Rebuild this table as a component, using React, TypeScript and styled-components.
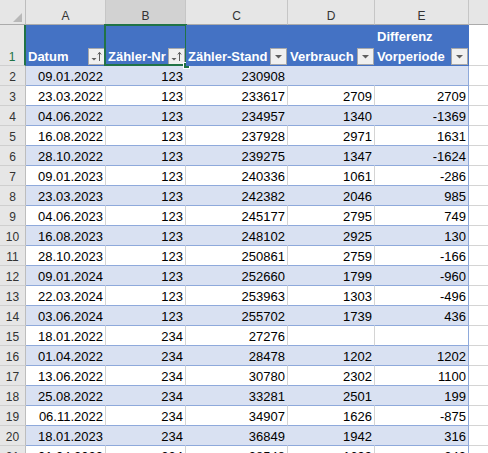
import React from "react";
import styled, { createGlobalStyle, css } from "styled-components";

const COLS = "26px 80px 80px 102px 87px 94px 1fr";

const GlobalStyle = createGlobalStyle`
  html, body { margin: 0; padding: 0; background: #fff; }
  body {
    font-family: "Liberation Sans", Arial, sans-serif;
    font-size: 13px;
    color: #000;
  }
  * { box-sizing: border-box; }
`;

const Sheet = styled.div`
  width: 488px;
  height: 453px;
  overflow: hidden;
  background: #fff;
`;

const Row = styled.div<{ $h: number }>`
  display: grid;
  grid-template-columns: ${COLS};
  height: ${(p) => p.$h}px;
`;

const Corner = styled.div`
  background: #e6e6e6;
  border-right: 1px solid #bdbdbd;
  border-bottom: 1px solid #ababab;
  display: flex;
  align-items: flex-end;
  justify-content: flex-end;
  padding: 0 3px 2px 0;
`;

const ColHeader = styled.div<{ $selected?: boolean }>`
  background: ${(p) => (p.$selected ? "#d2d2d2" : "#e6e6e6")};
  border-right: 1px solid #c6c6c6;
  border-bottom: 1px solid #ababab;
  display: flex;
  align-items: flex-end;
  justify-content: center;
  padding-bottom: 1px;
  font-size: 12px;
  line-height: 14px;
  color: #333;
`;

const RowHeader = styled.div<{ $selected?: boolean }>`
  background: #e6e6e6;
  border-right: ${(p) => (p.$selected ? "2px solid #217346" : "1px solid #bdbdbd")};
  border-bottom: 1px solid #cfcfcf;
  display: flex;
  align-items: flex-end;
  justify-content: center;
  font-size: 12px;
  line-height: 16px;
  color: ${(p) => (p.$selected ? "#217346" : "#333")};
`;

const HeadCell = styled.div<{ $last?: boolean }>`
  position: relative;
  background: #4472c4;
  border-right: 1px solid #4472c4;
  border-bottom: 1px solid #4472c4;
  display: flex;
  align-items: flex-end;
  justify-content: space-between;
  padding-left: 2px;
  color: #fff;
  font-weight: bold;
  line-height: 16px;
  white-space: nowrap;
  overflow: visible;
`;

const HeadLabel = styled.div`
  display: flex;
  flex-direction: column;
  gap: 4px;
`;

const FilterButton = styled.span`
  flex: none;
  width: 17px;
  height: 17px;
  background: #f0f0f0;
  border: 1px solid #a9a9a9;
  display: flex;
  align-items: center;
  justify-content: center;
`;

const Selection = styled.span`
  position: absolute;
  left: -2px;
  top: -1px;
  right: -2px;
  bottom: -1px;
  border: 2px solid #217346;
  pointer-events: none;
`;

const Handle = styled.span`
  position: absolute;
  right: -5px;
  bottom: -5px;
  width: 7px;
  height: 7px;
  background: #217346;
  border: 1px solid #fff;
`;

const DataCell = styled.div<{ $band: boolean; $last?: boolean }>`
  background: ${(p) => (p.$band ? "#d9e1f2" : "#fff")};
  border-right: 1px solid
    ${(p) => (p.$last ? "#8ea9db" : p.$band ? "#d9e1f2" : "#d4d4d4")};
  border-bottom: 1px solid #8ea9db;
  display: flex;
  align-items: flex-end;
  justify-content: flex-end;
  padding-right: 2px;
  line-height: 16px;
  white-space: nowrap;
`;

const OuterCell = styled.div`
  background: #fff;
  border-bottom: 1px solid #d4d4d4;
`;

const OuterColHeader = styled.div`
  background: #e6e6e6;
  border-bottom: 1px solid #ababab;
`;

const Triangle = () => (
  <svg width="9" height="9" viewBox="0 0 9 9">
    <polygon points="9,0 9,9 0,9" fill="#b8b8b8" />
  </svg>
);

const PlainIcon = () => (
  <svg width="15" height="15" viewBox="0 0 15 15">
    <polygon points="4,6 11,6 7.5,9.5" fill="#5f5f5f" />
  </svg>
);

const SortedIcon = () => (
  <svg width="15" height="15" viewBox="0 0 15 15">
    <polygon points="2.5,9 7.5,9 5,11.5" fill="#5f5f5f" />
    <line x1="10.5" y1="3.5" x2="10.5" y2="12" stroke="#5f5f5f" strokeWidth="1" />
    <polyline points="8.8,5.5 10.5,3.3 12.2,5.5" fill="none" stroke="#5f5f5f" strokeWidth="1" />
  </svg>
);

const headers: { label: string[]; sorted?: boolean; selected?: boolean }[] = [
  { label: ["Datum"], sorted: true },
  { label: ["Zähler-Nr"], sorted: true, selected: true },
  { label: ["Zähler-Stand"] },
  { label: ["Verbrauch"] },
  { label: ["Differenz", "Vorperiode"] },
];

const data: string[][] = [
  ["09.01.2022", "123", "230908", "", ""],
  ["23.03.2022", "123", "233617", "2709", "2709"],
  ["04.06.2022", "123", "234957", "1340", "-1369"],
  ["16.08.2022", "123", "237928", "2971", "1631"],
  ["28.10.2022", "123", "239275", "1347", "-1624"],
  ["09.01.2023", "123", "240336", "1061", "-286"],
  ["23.03.2023", "123", "242382", "2046", "985"],
  ["04.06.2023", "123", "245177", "2795", "749"],
  ["16.08.2023", "123", "248102", "2925", "130"],
  ["28.10.2023", "123", "250861", "2759", "-166"],
  ["09.01.2024", "123", "252660", "1799", "-960"],
  ["22.03.2024", "123", "253963", "1303", "-496"],
  ["03.06.2024", "123", "255702", "1739", "436"],
  ["18.01.2022", "234", "27276", "", ""],
  ["01.04.2022", "234", "28478", "1202", "1202"],
  ["13.06.2022", "234", "30780", "2302", "1100"],
  ["25.08.2022", "234", "33281", "2501", "199"],
  ["06.11.2022", "234", "34907", "1626", "-875"],
  ["18.01.2023", "234", "36849", "1942", "316"],
  ["01.04.2023", "234", "38548", "1699", "-243"],
];

export default function App() {
  return (
    <>
      <GlobalStyle />
      <Sheet>
        <Row $h={25}>
          <Corner>
            <Triangle />
          </Corner>
          {["A", "B", "C", "D", "E"].map((l) => (
            <ColHeader key={l} $selected={l === "B"}>
              {l}
            </ColHeader>
          ))}
          <OuterColHeader />
        </Row>
        <Row $h={41}>
          <RowHeader $selected>1</RowHeader>
          {headers.map((h, i) => (
            <HeadCell key={i} $last={i === 4}>
              <HeadLabel>
                {h.label.map((t) => (
                  <span key={t}>{t}</span>
                ))}
              </HeadLabel>
              <FilterButton>{h.sorted ? <SortedIcon /> : <PlainIcon />}</FilterButton>
              {h.selected && (
                <Selection>
                  <Handle />
                </Selection>
              )}
            </HeadCell>
          ))}
          <OuterCell />
        </Row>
        {data.map((r, i) => {
          const band = i % 2 === 0;
          return (
            <Row $h={20} key={i}>
              <RowHeader>{i + 2}</RowHeader>
              {r.map((v, j) => (
                <DataCell key={j} $band={band} $last={j === 4}>
                  {v}
                </DataCell>
              ))}
              <OuterCell />
            </Row>
          );
        })}
      </Sheet>
    </>
  );
}
